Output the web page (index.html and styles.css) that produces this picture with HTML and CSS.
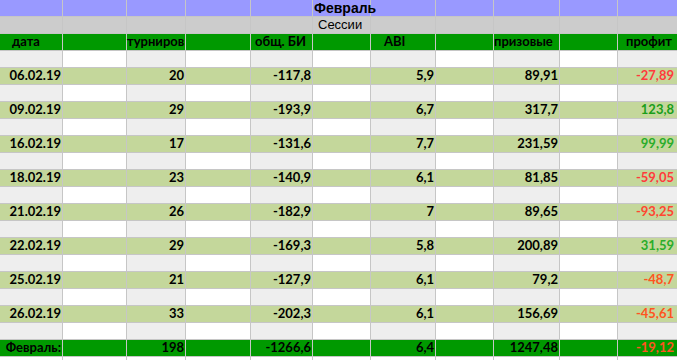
FILE: index.html
```html
<!DOCTYPE html>
<html lang="ru">
<head>
<meta charset="utf-8">
<title>Февраль</title>
<link rel="stylesheet" href="styles.css">
</head>
<body>
<table class="sheet">
  <colgroup>
    <col class="c-a"><col class="c-b"><col class="c-c"><col class="c-d"><col class="c-e"><col class="c-f">
    <col class="c-g"><col class="c-h"><col class="c-i"><col class="c-j"><col class="c-k">
  </colgroup>
  <tr class="title">
    <td></td><td></td><td></td><td></td><td></td><td class="title-cell">Февраль</td><td></td><td></td><td></td><td></td><td></td>
  </tr>
  <tr class="sessions">
    <td></td><td></td><td></td><td></td><td></td><td class="sessions-cell">Сессии</td><td></td><td></td><td></td><td></td><td></td>
  </tr>
  <tr class="head">
    <td class="h-date">дата</td><td></td><td class="h-count">турниров</td><td></td><td class="h-bi">общ. БИ</td><td></td>
    <td class="h-abi">ABI</td><td></td><td class="h-prize">призовые</td><td></td><td class="h-profit">профит</td>
  </tr>
  <tr class="blank"><td class="d"></td><td></td><td class="d"></td><td></td><td class="d"></td><td></td><td class="d"></td><td></td><td class="d"></td><td></td><td class="d"></td></tr>
  <tr class="row"><td>06.02.19</td><td></td><td>20</td><td></td><td>-117,8</td><td></td><td>5,9</td><td></td><td>89,91</td><td></td><td class="neg1">-27,89</td></tr>
  <tr class="blank"><td class="d"></td><td></td><td class="d"></td><td></td><td class="d"></td><td></td><td class="d"></td><td></td><td class="d"></td><td></td><td class="d"></td></tr>
  <tr class="row"><td>09.02.19</td><td></td><td>29</td><td></td><td>-193,9</td><td></td><td>6,7</td><td></td><td>317,7</td><td></td><td class="pos1">123,8</td></tr>
  <tr class="blank"><td class="d"></td><td></td><td class="d"></td><td></td><td class="d"></td><td></td><td class="d"></td><td></td><td class="d"></td><td></td><td class="d"></td></tr>
  <tr class="row"><td>16.02.19</td><td></td><td>17</td><td></td><td>-131,6</td><td></td><td>7,7</td><td></td><td>231,59</td><td></td><td class="pos2">99,99</td></tr>
  <tr class="blank"><td class="d"></td><td></td><td class="d"></td><td></td><td class="d"></td><td></td><td class="d"></td><td></td><td class="d"></td><td></td><td class="d"></td></tr>
  <tr class="row"><td>18.02.19</td><td></td><td>23</td><td></td><td>-140,9</td><td></td><td>6,1</td><td></td><td>81,85</td><td></td><td class="neg1">-59,05</td></tr>
  <tr class="blank"><td class="d"></td><td></td><td class="d"></td><td></td><td class="d"></td><td></td><td class="d"></td><td></td><td class="d"></td><td></td><td class="d"></td></tr>
  <tr class="row"><td>21.02.19</td><td></td><td>26</td><td></td><td>-182,9</td><td></td><td>7</td><td></td><td>89,65</td><td></td><td class="neg2">-93,25</td></tr>
  <tr class="blank"><td class="d"></td><td></td><td class="d"></td><td></td><td class="d"></td><td></td><td class="d"></td><td></td><td class="d"></td><td></td><td class="d"></td></tr>
  <tr class="row"><td>22.02.19</td><td></td><td>29</td><td></td><td>-169,3</td><td></td><td>5,8</td><td></td><td>200,89</td><td></td><td class="pos2">31,59</td></tr>
  <tr class="blank"><td class="d"></td><td></td><td class="d"></td><td></td><td class="d"></td><td></td><td class="d"></td><td></td><td class="d"></td><td></td><td class="d"></td></tr>
  <tr class="row"><td>25.02.19</td><td></td><td>21</td><td></td><td>-127,9</td><td></td><td>6,1</td><td></td><td>79,2</td><td></td><td class="neg3">-48,7</td></tr>
  <tr class="blank"><td class="d"></td><td></td><td class="d"></td><td></td><td class="d"></td><td></td><td class="d"></td><td></td><td class="d"></td><td></td><td class="d"></td></tr>
  <tr class="row"><td>26.02.19</td><td></td><td>33</td><td></td><td>-202,3</td><td></td><td>6,1</td><td></td><td>156,69</td><td></td><td class="neg3">-45,61</td></tr>
  <tr class="blank"><td class="d"></td><td></td><td class="d"></td><td></td><td class="d"></td><td></td><td class="d"></td><td></td><td class="d"></td><td></td><td class="d"></td></tr>
  <tr class="total"><td>Февраль:</td><td></td><td>198</td><td></td><td>-1266,6</td><td></td><td>6,4</td><td></td><td>1247,48</td><td></td><td class="neg3">-19,12</td></tr>
  <tr class="tail"><td></td><td></td><td></td><td></td><td></td><td></td><td></td><td></td><td></td><td></td><td></td></tr>
</table>
</body>
</html>
```
FILE: styles.css
```css
html, body {
  margin: 0;
  padding: 0;
  background: #ffffff;
  overflow: hidden;
}

.sheet {
  border-collapse: separate;
  border-spacing: 1px;
  background: #c6c6c6;
  table-layout: fixed;
  width: 679px;
  margin: -1px 0 0 -1px;
  font-family: Lato, "Noto Sans", sans-serif;
  font-weight: 700;
  font-size: 13px;
  color: #000;
}

.c-a { width: 62px; }
.c-b { width: 63px; }
.c-c { width: 58px; }
.c-d { width: 64px; }
.c-e { width: 61px; }
.c-f { width: 57px; }
.c-g { width: 64px; }
.c-h { width: 57px; }
.c-i { width: 65px; }
.c-j { width: 57px; }
.c-k { width: 59px; }

.sheet td {
  height: 16px;
  padding: 0 1px 0 0;
  line-height: 15px;
  white-space: nowrap;
  overflow: visible;
  text-align: right;
  vertical-align: top;
  background: #ffffff;
}

/* title rows */
.title td {
  background: #9999ff;
  font-family: "Liberation Sans", Arial, sans-serif;
  font-size: 14px;
  line-height: 16px;
}
.title .title-cell {
  text-align: left;
  padding-left: 1px;
  position: relative;
  z-index: 1;
}
.sessions td {
  background: #cccccc;
  font-family: "Liberation Sans", Arial, sans-serif;
  font-weight: 400;
  font-size: 13px;
  line-height: 16px;
}
.sessions .sessions-cell {
  text-align: left;
  padding-left: 5px;
}

/* header */
.head td {
  background: #009900;
  text-align: left;
}
.head .h-date { padding-left: 12px; }
.head .h-count { padding-left: 0; }
.head .h-bi { padding-left: 4px; }
.head .h-abi { padding-left: 13px; }
.head .h-prize { padding-left: 0; }
.head .h-profit { padding-left: 8px; }

/* body */
.blank td.d { background: #eeeeee; }
.row td { background: #c4d79b; }
.total td { background: #009900; }
.sheet td.neg1, .sheet td.neg2, .sheet td.neg3,
.sheet td.pos1, .sheet td.pos2 { padding-right: 3px; }

.neg1 { color: #ff3b3b; }
.neg2 { color: #ff4630; }
.neg3 { color: #ff5420; }
.pos1 { color: #1a9e1a; }
.pos2 { color: #2aad2a; }
```
